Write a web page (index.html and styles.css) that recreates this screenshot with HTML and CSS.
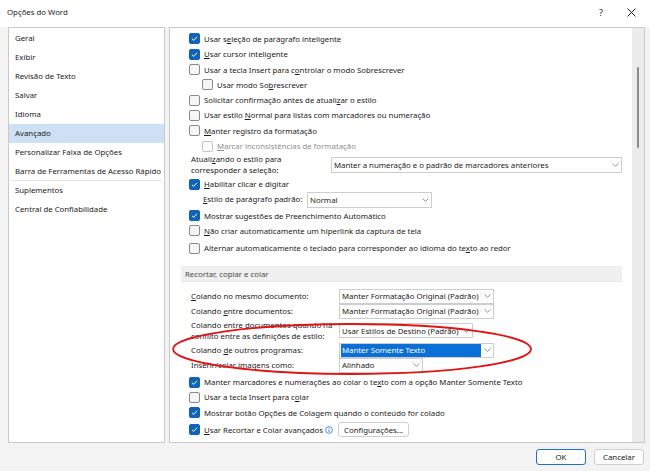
FILE: index.html
```html
<!DOCTYPE html>
<html lang="pt-BR">
<head>
  <meta charset="UTF-8" />
  <title>Opções do Word</title>
  <link rel="stylesheet" href="styles.css">
</head>
<body>

  <div class="dialog">
    <!-- barra de título -->
    <div class="titlebar">
      <span class="title">Opções do Word</span>
      <span class="tb-btn help">?</span>
      <span class="tb-btn close">
        <svg width="9" height="9" viewBox="0 0 9 9"><path d="M0.5 0.5 L8.5 8.5 M8.5 0.5 L0.5 8.5" stroke="#222" stroke-width="1" fill="none"/></svg>
      </span>
    </div>

    <div class="main">
      <!-- menu da esquerda -->
      <ul class="nav">
        <li>Geral</li>
        <li>Exibir</li>
        <li>Revisão de Texto</li>
        <li>Salvar</li>
        <li>Idioma</li>
        <li class="active">Avançado</li>
        <li>Personalizar Faixa de Opções</li>
        <li class="sep-after">Barra de Ferramentas de Acesso Rápido</li>
        <li>Suplementos</li>
        <li>Central de Confiabilidade</li>
      </ul>

      <!-- painel de opções -->
      <div class="panel">
        <div class="options">
          <div class="check-row"><span class="cb on"></span><span>Usar s<u>e</u>leção de parágrafo inteligente</span></div>
          <div class="check-row"><span class="cb on"></span><span><u>U</u>sar cursor inteligente</span></div>
          <div class="check-row"><span class="cb"></span><span>Usar a tecla Insert para c<u>o</u>ntrolar o modo Sobrescrever</span></div>
          <div class="check-row indent"><span class="cb"></span><span>Usar modo So<u>b</u>rescrever</span></div>
          <div class="check-row"><span class="cb"></span><span>Solicitar confirmação antes de atuali<u>z</u>ar o estilo</span></div>
          <div class="check-row"><span class="cb"></span><span>Usar estilo <u>N</u>ormal para listas com marcadores ou numeração</span></div>
          <div class="check-row"><span class="cb"></span><span><u>M</u>anter registro da formatação</span></div>
          <div class="check-row indent disabled"><span class="cb"></span><span><u>M</u>arcar inconsistências de formatação</span></div>

          <div class="form-row tall">
            <label class="lbl w-atual">Atuali<u>z</u>ando o estilo para<br>corresponder à seleção:</label>
            <div class="select wide"><span class="value">Manter a numeração e o padrão de marcadores anteriores</span><span class="arrow"></span></div>
          </div>

          <div class="check-row"><span class="cb on"></span><span><u>H</u>abilitar clicar e digitar</span></div>
          <div class="form-row mid indent">
            <label class="lbl w-estilo"><u>E</u>stilo de parágrafo padrão:</label>
            <div class="select w-normal"><span class="value">Normal</span><span class="arrow"></span></div>
          </div>
          <div class="check-row"><span class="cb on"></span><span>Mostrar sugestões de Preenchimento Automático</span></div>
          <div class="check-row"><span class="cb"></span><span><u>N</u>ão criar automaticamente um hiperlink da captura de tela</span></div>
          <div class="check-row gap2"><span class="cb"></span><span>Alternar automaticamente o teclado para corresponder ao idioma do te<u>x</u>to ao redor</span></div>

          <div class="section">Recortar, copiar e colar</div>

          <div class="form-row first">
            <label class="lbl w-colar"><u>C</u>olando no mesmo documento:</label>
            <div class="select w-fmt"><span class="value">Manter Formatação Original (Padrão)</span><span class="arrow"></span></div>
          </div>
          <div class="form-row">
            <label class="lbl w-colar">Colando <u>e</u>ntre documentos:</label>
            <div class="select w-fmt"><span class="value">Manter Formatação Original (Padrão)</span><span class="arrow"></span></div>
          </div>
          <div class="form-row tall2">
            <label class="lbl w-colar">Colando entre documentos quando há<br>conflito entre as definições de estilo:</label>
            <div class="select w-dest"><span class="value">Usar Estilos de Destino (Padrão)</span><span class="arrow"></span></div>
          </div>
          <div class="form-row">
            <label class="lbl w-colar">Colando <u>d</u>e outros programas:</label>
            <div class="select w-fmt selected"><span class="value">Manter Somente Texto</span><span class="arrow"></span></div>
          </div>
          <div class="form-row">
            <label class="lbl w-colar">Inserir/colar imagens como:</label>
            <div class="select w-img"><span class="value">Alinhado</span><span class="arrow"></span></div>
          </div>

          <div class="check-row gap1"><span class="cb on"></span><span>Manter marcadores e numerações ao colar o te<u>x</u>to com a opção Manter Somente Texto</span></div>
          <div class="check-row"><span class="cb"></span><span>Usar a tecla Insert para c<u>o</u>lar</span></div>
          <div class="check-row"><span class="cb on"></span><span>Mostrar botão Opções de Cola<u>g</u>em quando o conteúdo for colado</span></div>
          <div class="check-row gap2 btn-row">
            <span class="cb on"></span><span><u>U</u>sar Recortar e Colar avançados</span>
            <svg class="info" width="8" height="8" viewBox="0 0 8 8"><circle cx="4" cy="4" r="3.4" fill="none" stroke="#2a73c9" stroke-width="0.8"/><path d="M4 3.4 V6" stroke="#2a73c9" stroke-width="0.9"/><circle cx="4" cy="2.3" r="0.5" fill="#2a73c9"/></svg>
            <button class="small-btn">Configurações...</button>
          </div>
        </div>

        <div class="scrollbar"><div class="thumb"></div></div>
      </div>
    </div>

    <div class="footer">
      <button class="btn default">OK</button>
      <button class="btn">Cancelar</button>
    </div>

    <!-- marcação em vermelho por cima -->
    <svg class="mark" width="650" height="471" viewBox="0 0 650 471">
      <ellipse cx="352" cy="349" rx="179" ry="25" fill="none" stroke="#e01515" stroke-width="1.8"/>
    </svg>
  </div>

</body>
</html>
```

FILE: styles.css
```css
* {
  box-sizing: border-box;
}
body {
  margin: 0;
  padding: 0;
  font-family: 'Noto Sans', 'Open Sans', sans-serif;
  font-size: 7.8px;
  color: #1b1b1b;
  background-color: #f3f3f3;
}
u {
  text-decoration-thickness: 0.6px;
  text-underline-offset: 1px;
}
.dialog {
  position: relative;
  width: 650px;
  height: 471px;
  background-color: #f3f3f3;
  overflow: hidden;
}

/* barra de título */
.titlebar {
  display: flex;
  align-items: center;
  height: 27px;
  padding-left: 7px;
  background-color: #ffffff;
}
.title {
  flex: 1;
  font-size: 7.8px;
  margin-top: -3px;
}
.tb-btn {
  display: flex;
  align-items: center;
  justify-content: center;
  width: 30px;
  height: 24px;
  margin-top: -3px;
}
.help {
  font-size: 9px;
}
.close {
  margin-right: 4px;
}

/* área principal */
.main {
  display: flex;
  gap: 4px;
  height: 416px;
  padding-left: 8px;
  padding-right: 5px;
}
.nav {
  width: 158px;
  margin: 0;
  padding: 1px 0 0 0;
  list-style: none;
  background-color: #ffffff;
  border: 1px solid #c9c9c9;
}
.nav li {
  height: 19px;
  line-height: 19px;
  padding-left: 6px;
}
.nav li.active {
  background-color: #cde0f4;
}
.nav li.sep-after {
  position: relative;
}
.nav li.sep-after::after {
  content: '';
  position: absolute;
  left: 2px;
  right: 2px;
  bottom: 0;
  border-bottom: 1px solid #e4e4e4;
}

.panel {
  flex: 1;
  display: flex;
  background-color: #ffffff;
  border: 1px solid #c9c9c9;
}
.options {
  flex: 1;
  padding: 3.3px 10px 0 19px;
}
.scrollbar {
  width: 12px;
  background-color: #ececec;
  padding-top: 39px;
}
.thumb {
  width: 2px;
  height: 81px;
  margin-left: 5px;
  border-radius: 1px;
  background-color: #8c8c8c;
}

/* linhas de opções */
.check-row {
  display: flex;
  align-items: center;
  height: 15.3px;
  white-space: nowrap;
}
.check-row.indent {
  padding-left: 13px;
}
.check-row.disabled {
  color: #8f8f8f;
}
.check-row.gap1 {
  margin-top: 1.5px;
}
.check-row.gap2 {
  margin-top: 2px;
}
.cb {
  flex: none;
  width: 11px;
  height: 11px;
  margin-right: 4px;
  border: 1px solid #8a8a8a;
  border-radius: 2px;
  background-color: #f6f6f6;
}
.disabled .cb {
  border-color: #c6c6c6;
  background-color: #fbfbfb;
}
.cb.on {
  border-color: #0f63b8;
  background-color: #0f63b8;
  background-image: url("data:image/svg+xml,%3Csvg xmlns='http://www.w3.org/2000/svg' width='9' height='9' viewBox='0 0 9 9'%3E%3Cpath d='M2 4.8 L3.7 6.4 L7 2.8' stroke='white' stroke-width='1' fill='none'/%3E%3C/svg%3E");
  background-repeat: no-repeat;
  background-position: center;
}

.form-row {
  display: flex;
  align-items: center;
  height: 15px;
  padding-left: 2px;
  white-space: nowrap;
}
.form-row.tall {
  height: 23px;
}
.form-row.tall2 {
  height: 24px;
}
.form-row.mid {
  height: 16px;
}
.form-row.indent {
  padding-left: 14px;
}
.form-row.first {
  margin-top: 7px;
}
.lbl {
  line-height: 11px;
}
.w-atual {
  width: 140px;
}
.w-estilo {
  width: 104px;
}
.w-colar {
  width: 148px;
}

.select {
  display: flex;
  align-items: center;
  height: 15px;
  border: 1px solid #cdcdcd;
  background-color: #ffffff;
}
.form-row.tall .select,
.form-row.mid .select {
  height: 16px;
}
.select .value {
  flex: 1;
  padding-left: 2px;
  overflow: hidden;
}
.select .arrow {
  flex: none;
  width: 12px;
  height: 100%;
  background-image: url("data:image/svg+xml,%3Csvg xmlns='http://www.w3.org/2000/svg' width='7' height='4' viewBox='0 0 7 4'%3E%3Cpath d='M0.5 0.5 L3.5 3.3 L6.5 0.5' stroke='%23777' stroke-width='0.8' fill='none'/%3E%3C/svg%3E");
  background-repeat: no-repeat;
  background-position: center;
}
.select.wide {
  width: 291px;
}
.w-normal {
  width: 125px;
}
.w-fmt {
  width: 155px;
}
.w-dest {
  width: 134px;
}
.w-img {
  width: 84px;
}
.select.selected .value {
  height: 13px;
  margin: 1px 0 1px 1px;
  padding-left: 1px;
  line-height: 13px;
  color: #ffffff;
  background-color: #0a6fd6;
}

.section {
  height: 16px;
  line-height: 16px;
  margin: 10px 0 0 -8px;
  padding-left: 4px;
  color: #4a4a4a;
  background-color: #f0f0f0;
  border-bottom: 1px dotted #dcdcdc;
}

.info {
  margin: 0 5px 0 2px;
}
.small-btn {
  height: 15px;
  padding: 0 5px;
  font-family: inherit;
  font-size: 7.8px;
  color: #1b1b1b;
  background-color: #ffffff;
  border: 1px solid #cfcfcf;
  border-radius: 3px;
}

/* botões de baixo */
.footer {
  display: flex;
  justify-content: flex-end;
  gap: 8px;
  padding: 6px 6px 0 0;
}
.btn {
  width: 50px;
  height: 16px;
  font-family: inherit;
  font-size: 7.8px;
  color: #1b1b1b;
  background-color: #fdfdfd;
  border: 1px solid #cfcfcf;
  border-radius: 3px;
}
.btn.default {
  border-color: #1f6fc5;
}

.mark {
  position: absolute;
  left: 0;
  top: 0;
  pointer-events: none;
}
```
